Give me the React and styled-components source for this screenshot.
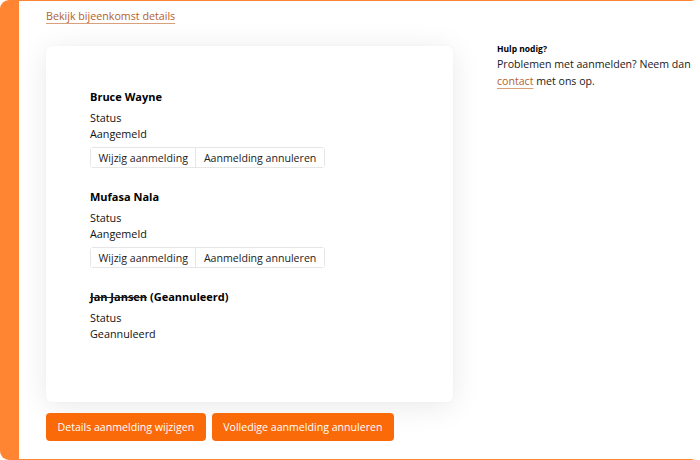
import React from "react";
import styled, { createGlobalStyle } from "styled-components";

const Global = createGlobalStyle`
  html, body { margin: 0; padding: 0; background: #fff; }
  body { font-family: "Open Sans", "Noto Sans", sans-serif; color: #1a1a1a; }
  * { box-sizing: border-box; }
`;

const Frame = styled.div`
  width: 700px;
  height: 460px;
  background: #ff8533;
  border-radius: 9px;
  padding: 1px 1px 1px 19px;
  display: flex;
`;

const Panel = styled.div`
  flex: 1;
  background: #fff;
  border-radius: 0 8px 8px 0;
  padding: 7px 0 0 27px;
  display: grid;
  grid-template-columns: 407px 1fr;
  grid-template-rows: auto auto auto;
  column-gap: 44px;
  align-content: start;
`;

const TopLink = styled.a`
  grid-column: 1 / 3;
  font-size: 10.7px;
  line-height: 17px;
  color: #b5612b;
  text-decoration: underline;
  text-decoration-thickness: 1px;
  text-underline-offset: 3px;
  text-decoration-color: #d9a07a;
  justify-self: start;
  cursor: pointer;
`;

const Card = styled.div`
  margin-top: 21px;
  height: 356px;
  background: #fff;
  border-radius: 6px;
  box-shadow: 0 4px 30px rgba(0, 0, 0, 0.09), 0 0 2px rgba(0, 0, 0, 0.04);
  padding: 43px 44px 0 44px;
  display: flex;
  flex-direction: column;
  gap: 21px;
`;

const Person = styled.div`
  display: flex;
  flex-direction: column;
  min-height: 79px;
`;

const Name = styled.div`
  font-weight: 700;
  font-size: 11px;
  line-height: 16px;
  color: #000;
  margin-bottom: 5px;
  s { text-decoration-thickness: 1px; text-decoration-color: #222; }
`;

const Label = styled.div`
  font-size: 10.8px;
  line-height: 16px;
  color: #111;
`;

const ButtonGroup = styled.div`
  display: inline-flex;
  align-self: flex-start;
  margin-top: 5px;
  border: 1px solid #e6e6e6;
  border-radius: 3px;
`;

const GroupButton = styled.button`
  font-family: inherit;
  font-size: 10.6px;
  line-height: 18px;
  color: #222;
  background: #fff;
  border: none;
  padding: 0 7.5px;
  height: 19px;
  cursor: pointer;
  & + & { border-left: 1px solid #e6e6e6; }
`;

const Side = styled.div`
  grid-row: 2 / 3;
  grid-column: 2 / 3;
  padding-top: 18px;
`;

const SideTitle = styled.div`
  font-weight: 700;
  font-size: 8.5px;
  line-height: 12px;
  color: #000;
  margin-bottom: 1px;
`;

const SideText = styled.p`
  margin: 0;
  font-size: 10.6px;
  line-height: 17px;
  color: #1a1a1a;
  width: 205px;
`;

const InlineLink = styled.a`
  color: #b5612b;
  text-decoration: underline;
  text-underline-offset: 3px;
  text-decoration-color: #d9a07a;
`;

const Actions = styled.div`
  grid-column: 1 / 3;
  margin-top: 11px;
  display: flex;
  gap: 6px;
`;

const OrangeButton = styled.button`
  font-family: inherit;
  font-size: 10.6px;
  color: #fff;
  background: #fb6a08;
  border: none;
  border-radius: 4px;
  height: 28px;
  padding: 0 11.5px;
  cursor: pointer;
`;

const people = [
  { name: "Bruce Wayne", status: "Aangemeld" },
  { name: "Mufasa Nala", status: "Aangemeld" },
  { name: "Jan Jansen", status: "Geannuleerd", cancelled: true },
];

export default function App() {
  return (
    <>
      <Global />
      <Frame>
        <Panel>
          <TopLink>Bekijk bijeenkomst details</TopLink>
          <Card>
            {people.map((p) => (
              <Person key={p.name}>
                <Name>
                  {p.cancelled ? (
                    <>
                      <s>{p.name}</s> (Geannuleerd)
                    </>
                  ) : (
                    p.name
                  )}
                </Name>
                <Label>Status</Label>
                <Label>{p.status}</Label>
                {!p.cancelled && (
                  <ButtonGroup>
                    <GroupButton>Wijzig aanmelding</GroupButton>
                    <GroupButton>Aanmelding annuleren</GroupButton>
                  </ButtonGroup>
                )}
              </Person>
            ))}
          </Card>
          <Side>
            <SideTitle>Hulp nodig?</SideTitle>
            <SideText>
              Problemen met aanmelden? Neem dan <InlineLink>contact</InlineLink> met ons op.
            </SideText>
          </Side>
          <Actions>
            <OrangeButton>Details aanmelding wijzigen</OrangeButton>
            <OrangeButton>Volledige aanmelding annuleren</OrangeButton>
          </Actions>
        </Panel>
      </Frame>
    </>
  );
}
